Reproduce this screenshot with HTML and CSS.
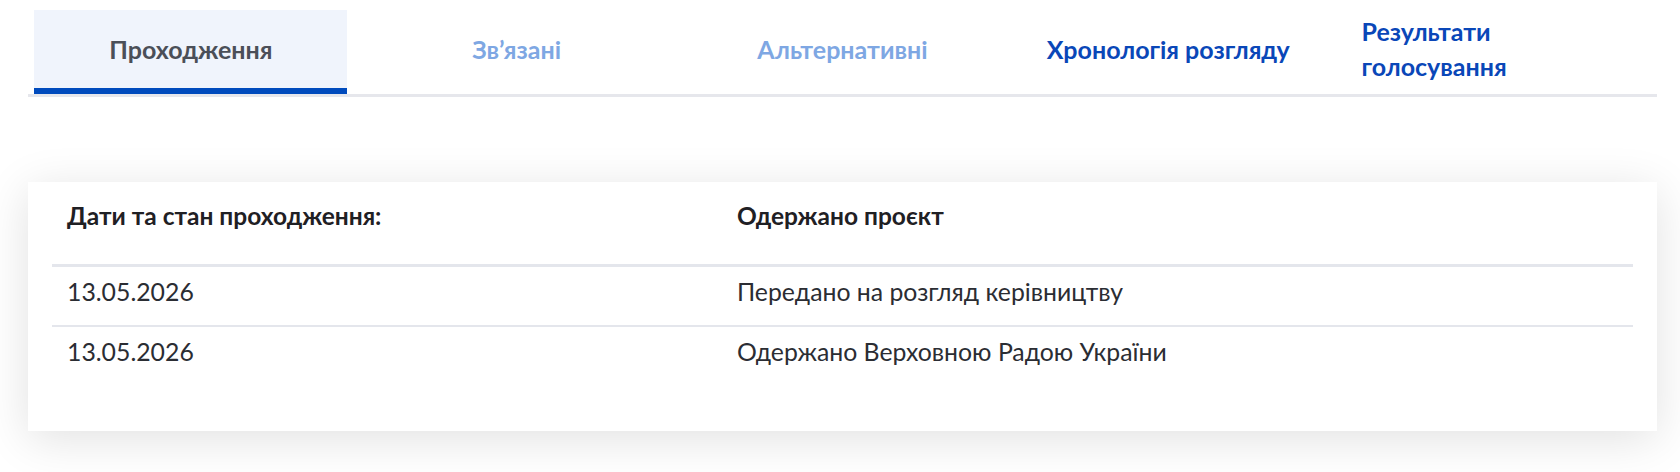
FILE: index.html
```html
<!DOCTYPE html>
<html lang="uk">
<head>
<meta charset="utf-8">
<title>Проходження</title>
<link rel="stylesheet" href="styles.css">
</head>
<body>
<div class="page">
  <nav class="tabs">
    <a class="tab tab-active"><span>Проходження</span></a>
    <a class="tab tab-muted"><span>Зв’язані</span></a>
    <a class="tab tab-muted"><span>Альтернативні</span></a>
    <a class="tab tab-link"><span>Хронологія розгляду</span></a>
    <a class="tab tab-link"><span>Результати голосування</span></a>
  </nav>

  <section class="card">
    <div class="table">
      <div class="row row-head">
        <div class="cell cell-date">Дати та стан проходження:</div>
        <div class="cell">Одержано проєкт</div>
      </div>
      <div class="row">
        <div class="cell cell-date">13.05.2026</div>
        <div class="cell">Передано на розгляд керівництву</div>
      </div>
      <div class="row row-last">
        <div class="cell cell-date">13.05.2026</div>
        <div class="cell">Одержано Верховною Радою України</div>
      </div>
    </div>
  </section>
</div>
</body>
</html>
```

FILE: styles.css
```css
* {
  box-sizing: border-box;
}

html, body {
  margin: 0;
  padding: 0;
  background: #ffffff;
}

body {
  font-family: "Lato", "Liberation Sans", sans-serif;
  color: #2b2d33;
  min-height: 472px;
}

.page {
  width: 1629px;
  margin-left: 28px;
  padding-top: 10px;
  padding-bottom: 42px;
}

.tabs {
  display: flex;
  justify-content: space-around;
  border-bottom: 3px solid #e6e7ec;
}

.tab {
  width: 313px;
  height: 84px;
  padding: 0 24px;
  display: flex;
  align-items: center;
  justify-content: center;
  border-bottom: 6px solid transparent;
  font-size: 25px;
  font-weight: 700;
  line-height: 35px;
  text-decoration: none;
}

.tab span {
  text-align: left;
}

.tab-active {
  background: #f0f4fc;
  border-bottom-color: #004bbd;
  color: #4b4f58;
}

.tab-muted {
  color: #7ea7e3;
}

.tab-link {
  color: #0a47b8;
}

.card {
  margin-top: 85px;
  background: #ffffff;
  padding: 20px 24px 46px;
  box-shadow: 0 8px 44px rgba(0, 0, 0, 0.12);
}

.row {
  display: grid;
  grid-template-columns: 670px 1fr;
  border-bottom: 2px solid #e4e6ec;
}

.row-last {
  border-bottom: none;
}

.cell {
  padding: 11px 15px 19px;
  font-size: 24.8px;
  line-height: 28px;
}

.row-head .cell {
  padding: 0 15px 34px;
  font-size: 24.5px;
  font-weight: 700;
  color: #1f2024;
}

.row-head {
  border-bottom-width: 3px;
}
```
